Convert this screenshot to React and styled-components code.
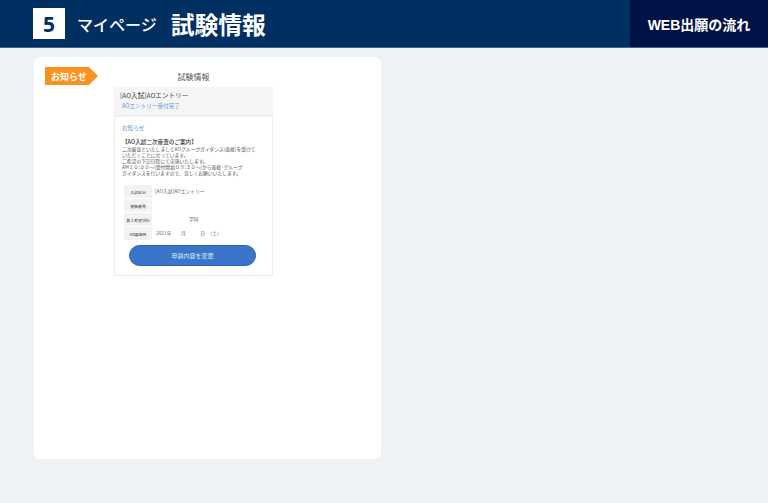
import React from "react";
import styled, { createGlobalStyle } from "styled-components";

const Global = createGlobalStyle`
  html, body { margin: 0; padding: 0; background: #eef2f5; }
  body { font-family: "Noto Sans CJK JP", "Noto Sans", sans-serif; width: 768px; height: 503px; overflow: hidden; }
  * { box-sizing: border-box; }
`;
const Header = styled.header`
  display: flex; align-items: stretch; justify-content: space-between;
  height: 48px; background: #002f62; border-bottom: 1px solid #44628a;
`;
const HeaderLeft = styled.div`
  display: flex; align-items: center; padding-left: 33px;
`;
const StepBox = styled.div`
  width: 32px; height: 31px; background: #fff; color: #002f62;
  display: flex; align-items: center; justify-content: center;
  font: 700 21px "Open Sans", sans-serif; margin-right: 12px;
`;
const Sub = styled.span`
  color: #fff; font-size: 16px; font-weight: 500; line-height: 1; margin-right: 14px;
`;
const Main = styled.h1`
  margin: 0; color: #fff; font-size: 23.8px; font-weight: 700; line-height: 1;
`;
const FlowButton = styled.div`
  width: 138px; background: #001347; color: #fff; display: flex; align-items: center; justify-content: center;
  font-size: 14px; font-weight: 700; font-family: "Liberation Sans", "Noto Sans CJK JP", sans-serif;
`;
const Content = styled.main`
  padding: 9px 34px 0;
`;
const Card = styled.section`
  position: relative; width: 347px; height: 402px; background: #fff; border-radius: 6px;
  padding: 13px 0 0 80px;
`;
const Badge = styled.div`
  position: absolute; left: 11px; top: 10px; width: 53px; height: 18px;
  background: #f7931e; color: #fff; font-size: 9px; font-weight: 700;
  display: flex; align-items: center; padding-left: 6px;
  clip-path: polygon(0 0, 44px 0, 100% 50%, 44px 100%, 0 100%);
`;
const Phone = styled.div`
  width: 159px;
`;
const PhoneTitle = styled.div`
  text-align: center; font-size: 8px; color: #555; line-height: 14px; height: 17px;
`;
const ExamHead = styled.div`
  background: #f5f5f5; height: 28px; padding: 3px 6px 0;
`;
const ExamName = styled.div`
  font-size: 6.6px; color: #444; line-height: 10px;
`;
const ExamStatus = styled.div`
  font-size: 5.6px; color: #5c95dc; line-height: 10px; margin-top: 1px; padding-left: 2px;
`;
const Panel = styled.div`
  height: 161px; border: 1px solid #eeeeee; border-top: 2px solid #f0f0f0; padding: 7px 7px 0; background: #fff;
  box-shadow: 0 0 1px rgba(0,0,0,.06);
`;
const NoticeLabel = styled.div`
  font-size: 5.6px; color: #5c95dc; line-height: 9px;
`;
const NoticeHeading = styled.div`
  margin-top: 5px; font-size: 5.6px; font-weight: 500; color: #333; line-height: 8px;
`;
const NoticeBody = styled.p`
  margin: 0; font-size: 4.8px; color: #555; line-height: 6px; white-space: nowrap;
`;
const InfoTable = styled.div`
  margin-top: 9px; display: flex; flex-direction: column; gap: 1px; margin-left: 2px;
`;
const Row = styled.div`
  display: flex; align-items: center; height: 13px;
`;
const Label = styled.div`
  width: 28px; height: 13px; background: #f2f2f2; color: #555; font-size: 3.9px; font-weight: 500;
  display: flex; align-items: center; justify-content: center; white-space: nowrap;
`;
const Value = styled.div`
  font-size: 4.8px; color: #666; padding-left: ${p => p.$pad || 3}px; white-space: pre; line-height: 1;
`;
const Submit = styled.div`
  margin: 5px 0 0 7px; width: 127px; height: 21px; border-radius: 11px;
  background: #3a75c9; border: 1px solid #2b5fb0; color: #dce8f8; font-size: 6px;
  display: flex; align-items: center; justify-content: center;
`;

export default function App() {
  return (
    <>
      <Global />
      <Header>
        <HeaderLeft>
          <StepBox>5</StepBox>
          <Sub>マイページ</Sub>
          <Main>試験情報</Main>
        </HeaderLeft>
        <FlowButton>WEB出願の流れ</FlowButton>
      </Header>
      <Content>
        <Card>
          <Badge>お知らせ</Badge>
          <Phone>
            <PhoneTitle>試験情報</PhoneTitle>
            <ExamHead>
              <ExamName>[AO入試]AOエントリー</ExamName>
              <ExamStatus>AOエントリー受付完了</ExamStatus>
            </ExamHead>
            <Panel>
              <NoticeLabel>お知らせ</NoticeLabel>
              <NoticeHeading>【AO入試二次審査のご案内】</NoticeHeading>
              <NoticeBody>
                二次審査といたしましてAOグループガイダンス(面接)を受けて<br />
                いただくことになっています。<br />
                ご希望の下記日程にて実施いたします。<br />
                AM１０:００～(受付開始０９:３０～)から面接･グループ<br />
                ガイダンスを行いますので、宜しくお願いいたします。
              </NoticeBody>
              <InfoTable>
                <Row><Label>入試区分</Label><Value>[AO入試]AOエントリー</Value></Row>
                <Row><Label>受験番号</Label></Row>
                <Row><Label>第１希望学科</Label><Value $pad={37}>学科</Value></Row>
                <Row><Label>AO面接日</Label><Value $pad={4}>2021年　　月　　　日　（土）</Value></Row>
              </InfoTable>
              <Submit>申請内容を変更</Submit>
            </Panel>
          </Phone>
        </Card>
      </Content>
    </>
  );
}
